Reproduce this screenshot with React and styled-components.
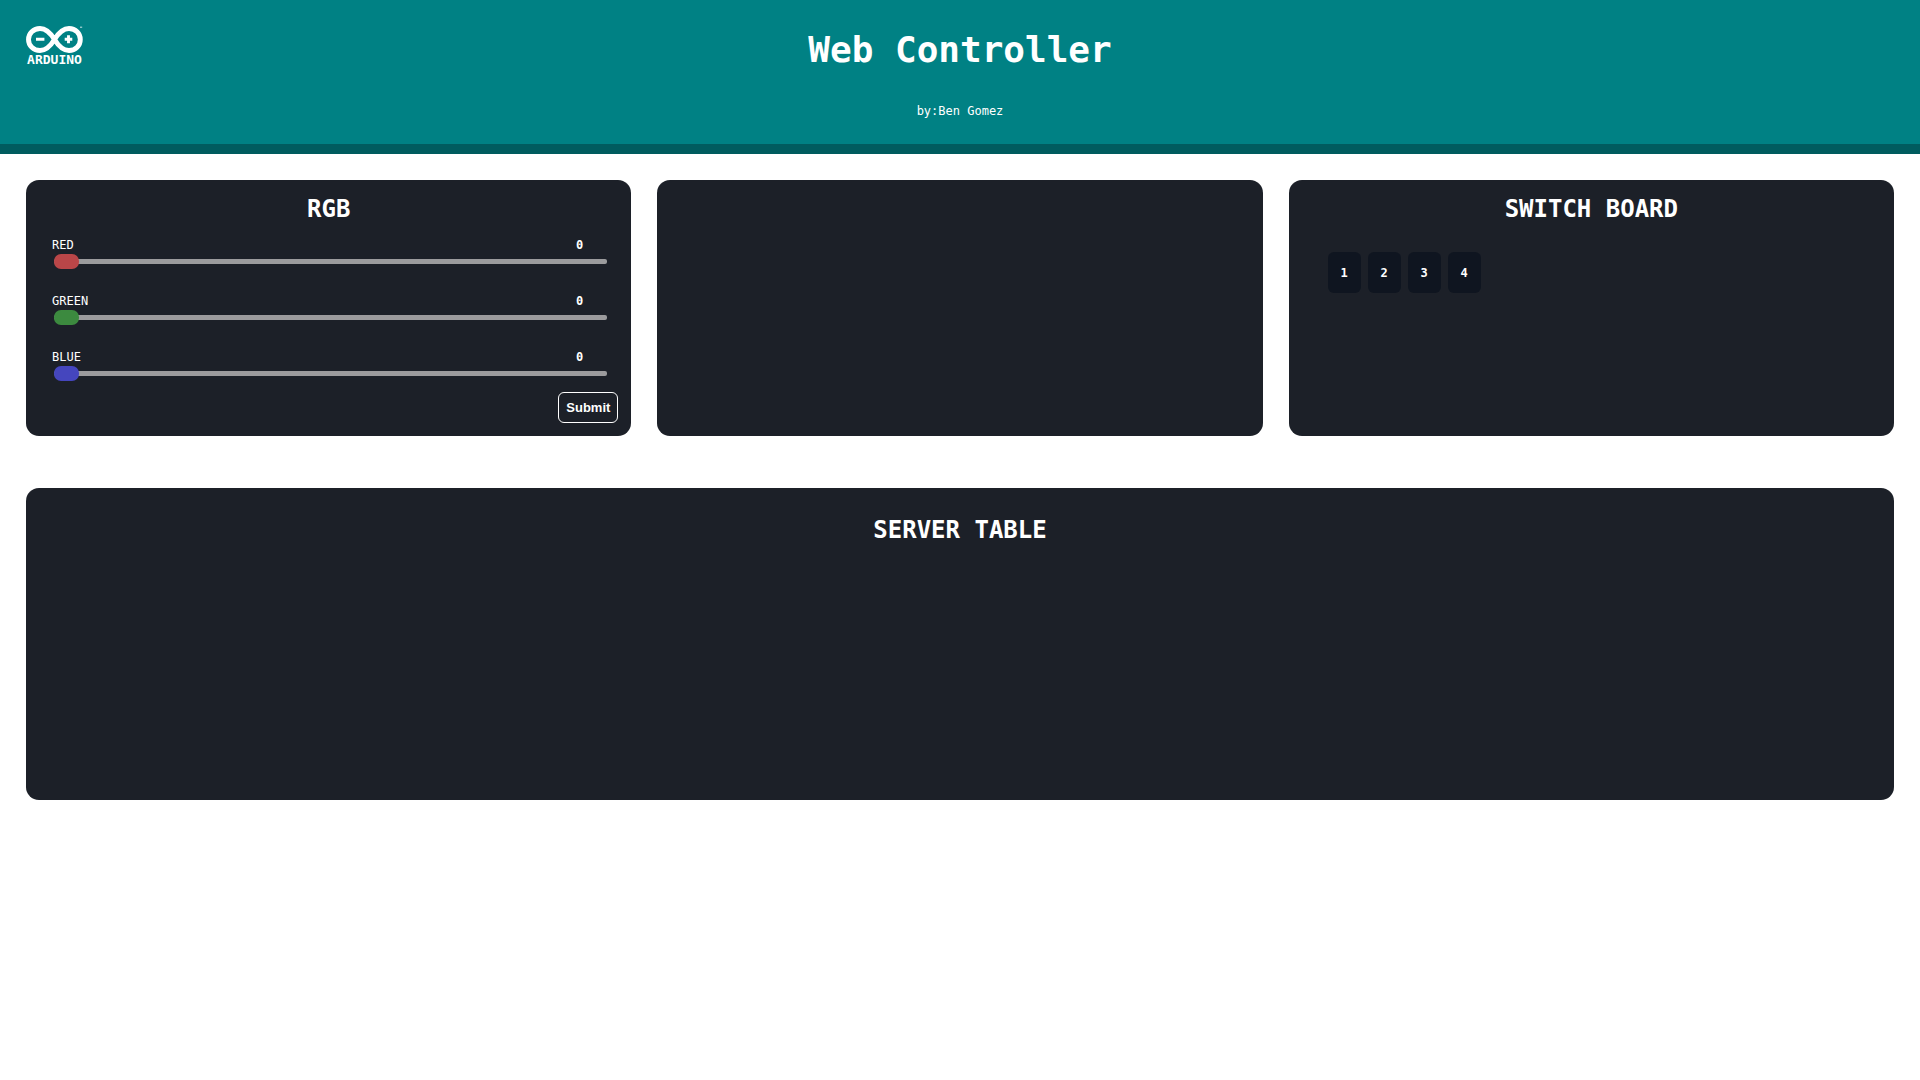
import React, { useState } from "react";
import styled, { createGlobalStyle } from "styled-components";

const GlobalStyle = createGlobalStyle`
  *, *::before, *::after { box-sizing: border-box; }
  body {
    margin: 0;
    background: #ffffff;
    color: #ffffff;
    font-family: "DejaVu Sans Mono", monospace;
    font-size: 12px;
    line-height: 16px;
  }
  h1, h2, p { margin: 0; }
`;

const Header = styled.header`
  display: grid;
  grid-template-columns: 1fr auto 1fr;
  padding: 26px 26px 25px;
  background: #008184;
  border-bottom: 10px solid #005c5f;
`;

const Logo = styled.div`
  display: flex;
  flex-direction: column;
  align-items: center;
  justify-self: start;
  align-self: start;
  font-size: 13px;
  font-weight: 700;
  line-height: 14px;
`;

const Mark = styled.svg`
  display: block;
  width: 57px;
  height: 27px;
`;

const Heading = styled.div`
  display: flex;
  flex-direction: column;
  align-items: center;
  gap: 29px;
`;

const Title = styled.h1`
  font-size: 36px;
  line-height: 48px;
`;

const Main = styled.main`
  display: grid;
  gap: 52px;
  padding: 26px;
`;

const Panels = styled.div`
  display: grid;
  grid-template-columns: repeat(3, 1fr);
  gap: 26px;
`;

const Card = styled.section`
  display: flex;
  flex-direction: column;
  padding: ${(p) => (p.$roomy ? "26px" : "13px")};
  min-height: ${(p) => (p.$roomy ? "312px" : "auto")};
  border-radius: 13px;
  background: #1c2028;
`;

const CardTitle = styled.h2`
  font-size: 24px;
  line-height: 32px;
  text-align: center;
`;

const Form = styled.form`
  display: flex;
  flex-direction: column;
  margin-top: 12px;
`;

const Channels = styled.div`
  display: grid;
  gap: 23px;
  padding: 0 9px 0 13px;
`;

const Channel = styled.div`
  display: grid;
`;

const ChannelHead = styled.div`
  display: flex;
  justify-content: space-between;
  padding-right: 26px;
`;

const Value = styled.output`
  font-weight: 700;
`;

const Slider = styled.input`
  appearance: none;
  height: 17px;
  margin: 0 2px;
  background: transparent;
  cursor: pointer;

  &::-webkit-slider-runnable-track {
    height: 5px;
    border-radius: 2px;
    background: #9b9b9d;
  }
  &::-webkit-slider-thumb {
    appearance: none;
    width: 25px;
    height: 15px;
    margin-top: -5px;
    border-radius: 7px;
    background: ${(p) => p.$color};
  }
`;

const Submit = styled.button`
  align-self: flex-end;
  margin-top: 10px;
  padding: 0 7px;
  border: 1px solid #ffffff;
  border-radius: 6px;
  background: transparent;
  color: #ffffff;
  font: 700 13px/29px "Liberation Sans", sans-serif;
  cursor: pointer;
`;

const Switches = styled.div`
  display: flex;
  gap: 7px;
  margin: 27px 26px 0;
`;

const Switch = styled.button`
  width: 33px;
  height: 41px;
  padding: 0;
  border: 0;
  border-radius: 6px;
  background: #0f1520;
  color: #ffffff;
  font: inherit;
  font-weight: 700;
  cursor: pointer;
`;

const CHANNELS = [
  { id: "red", label: "RED", color: "#ba4648" },
  { id: "green", label: "GREEN", color: "#3c8a3f" },
  { id: "blue", label: "BLUE", color: "#4546be" },
];

function ArduinoLogo() {
  return (
    <Logo>
      <Mark viewBox="0 0 57 27" fill="none" stroke="#ffffff" aria-hidden="true">
        <path
          strokeWidth="4.9"
          d="M28.5 13.5C24.5 7 20.5 2.5 14 2.5C7.4 2.5 2.5 7.4 2.5 13.5S7.4 24.5 14 24.5C20.5 24.5 24.5 20 28.5 13.5C32.5 7 36.5 2.5 43 2.5C49.6 2.5 54.3 7.4 54.3 13.5S49.6 24.5 43 24.5C36.5 24.5 32.5 20 28.5 13.5Z"
        />
        <path strokeWidth="2.9" d="M10 13.3H18.4M38.7 13.3H46.3M42.5 9.3V17.3" />
        <path strokeWidth="0.8" d="M54 1.2H56.2" />
      </Mark>
      ARDUINO
    </Logo>
  );
}

function RgbPanel() {
  const [values, setValues] = useState({ red: 0, green: 0, blue: 0 });
  return (
    <Card>
      <CardTitle>RGB</CardTitle>
      <Form onSubmit={(e) => e.preventDefault()}>
        <Channels>
          {CHANNELS.map(({ id, label, color }) => (
            <Channel key={id}>
              <ChannelHead>
                <label htmlFor={id}>{label}</label>
                <Value htmlFor={id}>{values[id]}</Value>
              </ChannelHead>
              <Slider
                id={id}
                type="range"
                min="0"
                max="255"
                $color={color}
                value={values[id]}
                onChange={(e) => setValues({ ...values, [id]: Number(e.target.value) })}
              />
            </Channel>
          ))}
        </Channels>
        <Submit type="submit">Submit</Submit>
      </Form>
    </Card>
  );
}

export default function App() {
  return (
    <>
      <GlobalStyle />
      <Header>
        <ArduinoLogo />
        <Heading>
          <Title>Web Controller</Title>
          <p>by:Ben Gomez</p>
        </Heading>
      </Header>
      <Main>
        <Panels>
          <RgbPanel />
          <Card />
          <Card>
            <CardTitle>SWITCH BOARD</CardTitle>
            <Switches>
              {[1, 2, 3, 4].map((n) => (
                <Switch key={n} type="button">{n}</Switch>
              ))}
            </Switches>
          </Card>
        </Panels>
        <Card $roomy>
          <CardTitle>SERVER TABLE</CardTitle>
        </Card>
      </Main>
    </>
  );
}
